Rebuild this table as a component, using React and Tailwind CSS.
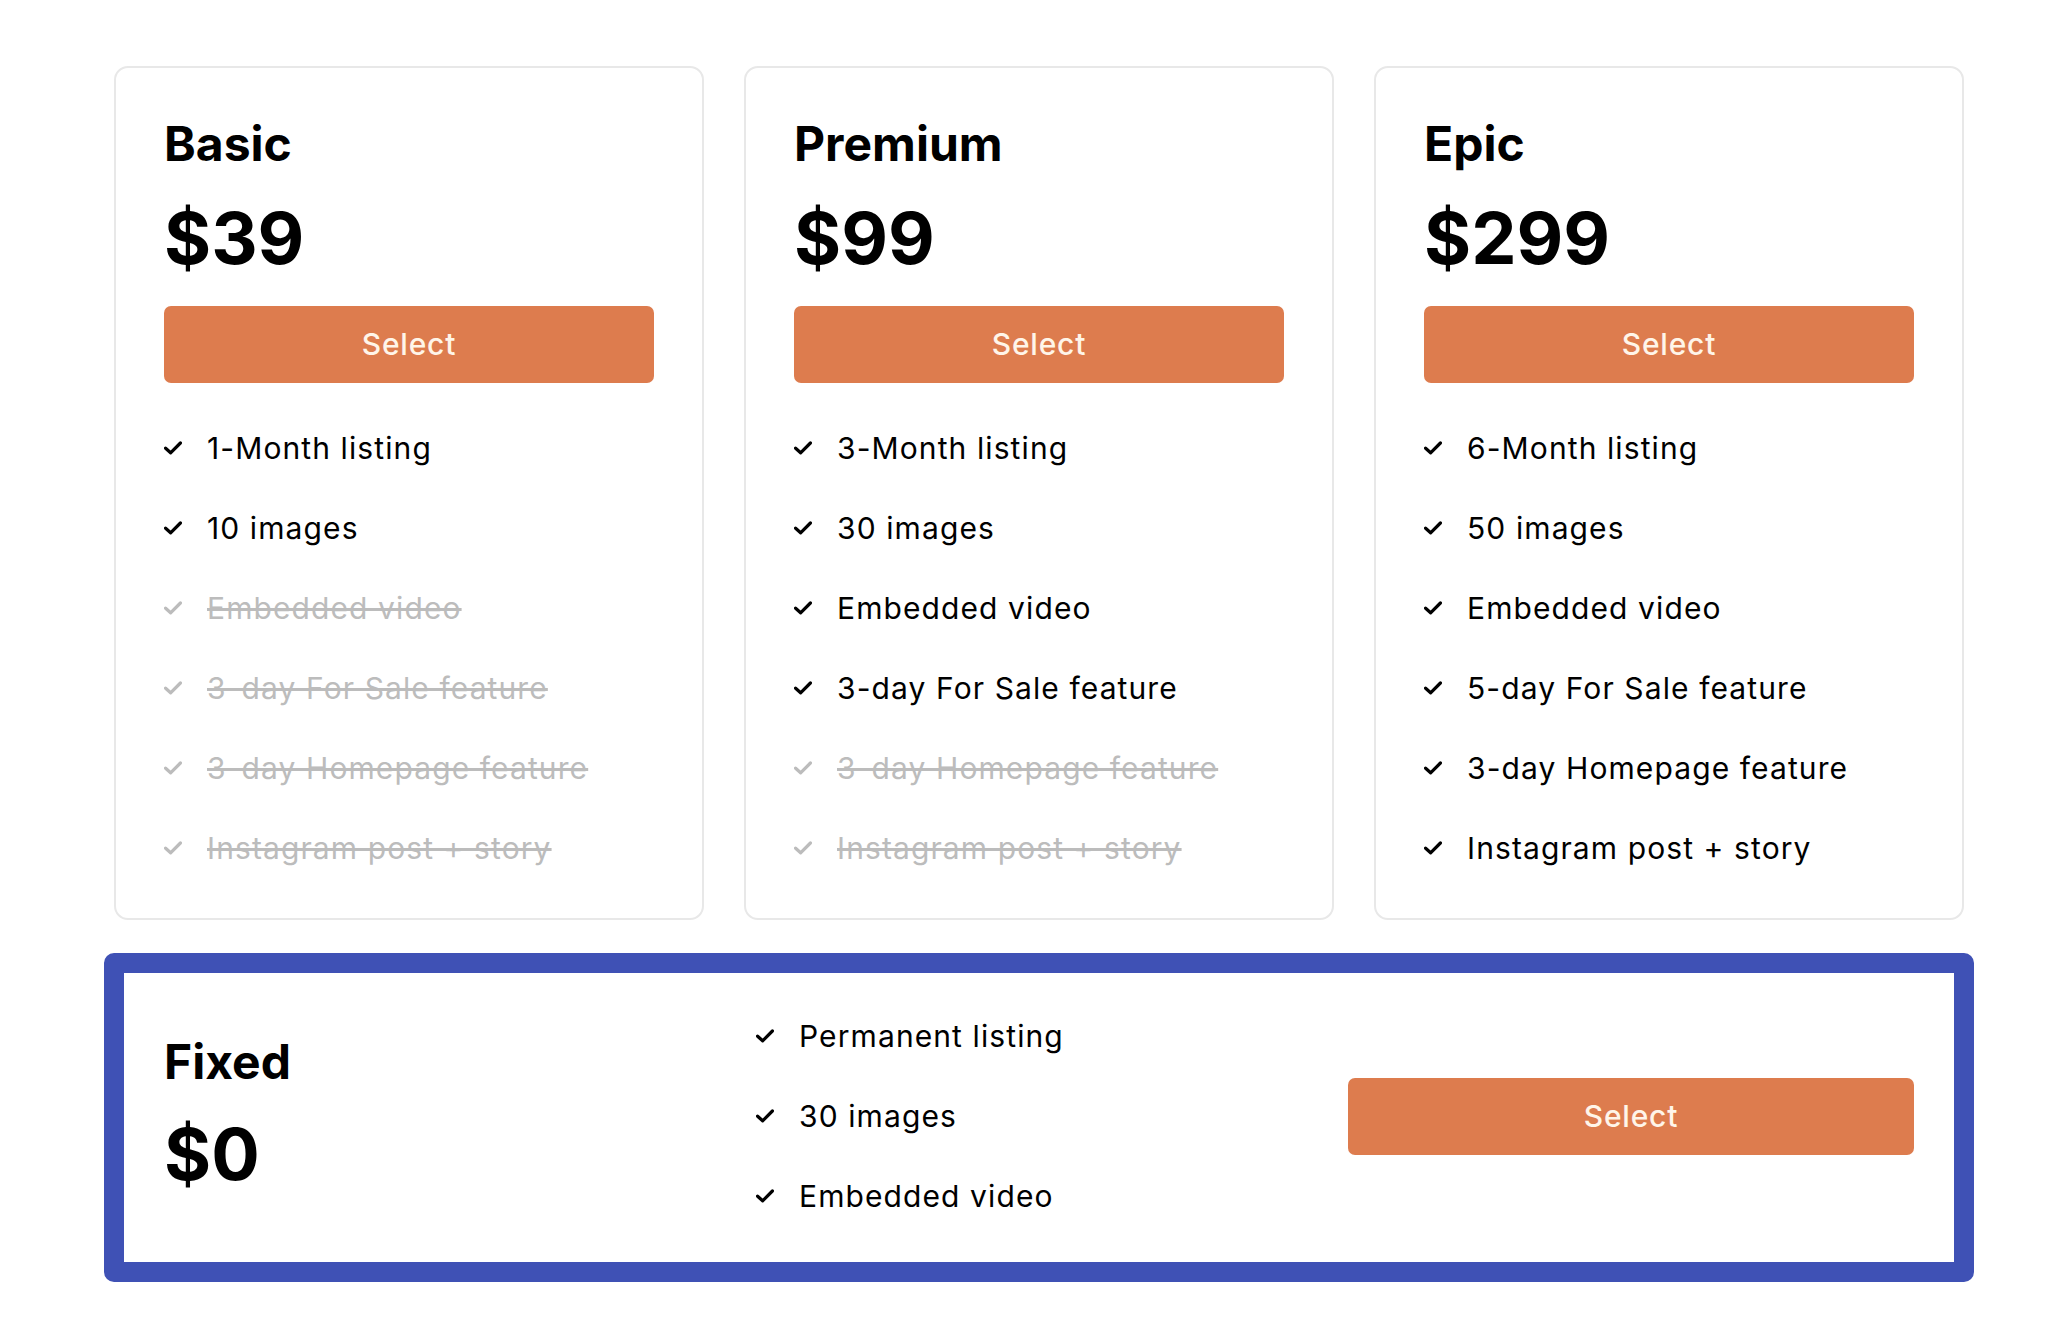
import React from 'react';

// ─── Plan data ────────────────────────────────────────────────────────────────
const plans = [
  {
    name: 'Basic',
    price: '$39',
    features: [
      { label: '1-Month listing', on: true },
      { label: '10 images', on: true },
      { label: 'Embedded video', on: false },
      { label: '3-day For Sale feature', on: false },
      { label: '3-day Homepage feature', on: false },
      { label: 'Instagram post + story', on: false },
    ],
  },
  {
    name: 'Premium',
    price: '$99',
    features: [
      { label: '3-Month listing', on: true },
      { label: '30 images', on: true },
      { label: 'Embedded video', on: true },
      { label: '3-day For Sale feature', on: true },
      { label: '3-day Homepage feature', on: false },
      { label: 'Instagram post + story', on: false },
    ],
  },
  {
    name: 'Epic',
    price: '$299',
    features: [
      { label: '6-Month listing', on: true },
      { label: '50 images', on: true },
      { label: 'Embedded video', on: true },
      { label: '5-day For Sale feature', on: true },
      { label: '3-day Homepage feature', on: true },
      { label: 'Instagram post + story', on: true },
    ],
  },
];

const fixedFeatures = ['Permanent listing', '30 images', 'Embedded video'];

function CheckMark({ muted }) {
  return (
    <svg
      width="18"
      height="14"
      viewBox="0 0 18 14"
      fill="none"
      className={muted ? 'shrink-0 text-[#bcbcbc]' : 'shrink-0 text-black'}
    >
      <polyline
        points="1.6,7.2 6.6,11.8 16.4,2"
        stroke="currentColor"
        strokeWidth="3.2"
        strokeLinecap="round"
        strokeLinejoin="round"
      />
    </svg>
  );
}

function Feature({ label, on = true }) {
  return (
    <li className="flex items-center gap-[25px] h-[36px]">
      <CheckMark muted={!on} />
      <span
        className={
          on
            ? 'text-[30px] leading-[36px] tracking-[1.1px] text-black'
            : 'text-[30px] leading-[36px] tracking-[1.1px] text-[#bcbcbc] line-through decoration-[#bcbcbc]'
        }
      >
        {label}
      </span>
    </li>
  );
}

function SelectButton() {
  return (
    <button className="w-full h-[77px] rounded-[7px] bg-[#dd7c4e] text-[#fff5e9] text-[30px] tracking-[0.8px] font-medium">
      Select
    </button>
  );
}

function PlanCard({ plan }) {
  return (
    <div className="rounded-[14px] border-2 border-[#e8e8e8] bg-white px-[48px] pt-[52px] pb-[52px]">
      <h2 className="text-[48px] leading-[48px] font-bold text-black">{plan.name}</h2>
      <div className="mt-[34px] text-[72px] leading-[72px] font-bold text-black">{plan.price}</div>
      <div className="mt-[32px]">
        <SelectButton />
      </div>
      <ul className="mt-[47px] flex flex-col gap-[44px]">
        {plan.features.map((f) => (
          <Feature key={f.label} label={f.label} on={f.on} />
        ))}
      </ul>
    </div>
  );
}

export default function App() {
  return (
    <div className="min-h-screen bg-white font-['Inter','Noto_Sans',sans-serif] pl-[114px] pr-[108px] pt-[66px] pb-[58px]">
      {/* ── Three plan cards ──────────────────────────────────────────── */}
      <div className="grid grid-cols-3 gap-[40px]">
        {plans.map((p) => (
          <PlanCard key={p.name} plan={p} />
        ))}
      </div>

      {/* ── Fixed plan (highlighted) ──────────────────────────────────── */}
      <div className="mt-[33px] -mx-[10px] rounded-[10px] border-[20px] border-[#3f51b5] bg-white px-[40px] pt-[45px] pb-[48px]">
        <div className="grid grid-cols-3 gap-[26px] items-center">
          <div className="flex flex-col gap-[32px] mb-[5px]">
            <h2 className="text-[48px] leading-[48px] font-bold text-black">Fixed</h2>
            <div className="text-[72px] leading-[72px] font-bold text-black">$0</div>
          </div>
          <ul className="flex flex-col gap-[44px]">
            {fixedFeatures.map((f) => (
              <Feature key={f} label={f} />
            ))}
          </ul>
          <div>
            <SelectButton />
          </div>
        </div>
      </div>
    </div>
  );
}
